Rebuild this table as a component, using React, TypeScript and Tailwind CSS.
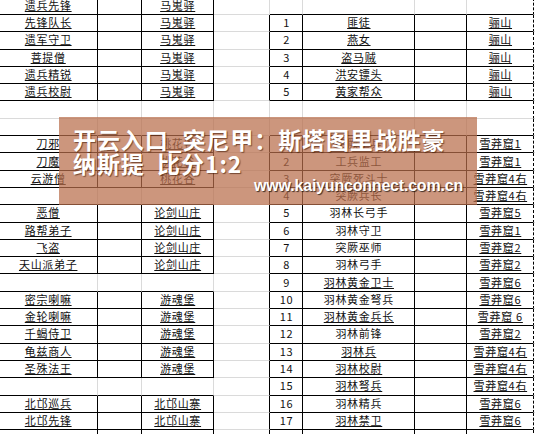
import React from 'react'

// spreadsheet rows: index = row on screen (row 0 is cut at the top)
const leftRows: Record<number, [string, string]> = {
  0: ['遗兵先锋', '马嵬驿'],
  1: ['先锋队长', '马嵬驿'],
  2: ['遗军守卫', '马嵬驿'],
  3: ['菩提僧', '马嵬驿'],
  4: ['遗兵精锐', '马嵬驿'],
  5: ['遗兵校尉', '马嵬驿'],
  8: ['刀邪', '桃花谷'],
  9: ['刀魔', '桃花谷'],
  10: ['云游僧', '桃花谷'],
  12: ['恶僧', '论剑山庄'],
  13: ['路帮弟子', '论剑山庄'],
  14: ['飞盗', '论剑山庄'],
  15: ['天山派弟子', '论剑山庄'],
  17: ['密宗喇嘛', '游魂堡'],
  18: ['金轮喇嘛', '游魂堡'],
  19: ['千蝎侍卫', '游魂堡'],
  20: ['龟兹商人', '游魂堡'],
  21: ['圣殊法王', '游魂堡'],
  23: ['北邙巡兵', '北邙山寨'],
  24: ['北邙先锋', '北邙山寨'],
  25: ['', ''],
}

// [no, name, underline name, place]
const rightRows: Record<number, [string, string, boolean, string]> = {
  1: ['1', '匪徒', true, '骊山'],
  2: ['2', '燕女', true, '骊山'],
  3: ['3', '盗马贼', true, '骊山'],
  4: ['4', '洪安镖头', true, '骊山'],
  5: ['5', '黄家帮众', true, '骊山'],
  8: ['1', '突厥工兵', false, '雪莽窟1'],
  9: ['2', '工兵监工', false, '雪莽窟1'],
  10: ['3', '突厥死斗士', false, '雪莽窟4右'],
  11: ['4', '突厥兵长', false, '雪莽窟4右'],
  12: ['5', '羽林长弓手', false, '雪莽窟5'],
  13: ['6', '羽林守卫', false, '雪莽窟1'],
  14: ['7', '突厥巫师', false, '雪莽窟2'],
  15: ['8', '羽林弓手', false, '雪莽窟2'],
  16: ['9', '羽林黄金卫士', true, '雪莽窟6'],
  17: ['10', '羽林黄金弩兵', false, '雪莽窟6'],
  18: ['11', '羽林黄金兵长', true, '雪莽窟 6'],
  19: ['12', '羽林前锋', false, '雪莽窟2'],
  20: ['13', '羽林兵', true, '雪莽窟4右'],
  21: ['14', '羽林校尉', true, '雪莽窟4右'],
  22: ['15', '羽林弩兵', true, '雪莽窟4右'],
  23: ['16', '羽林精兵', false, '雪莽窟6'],
  24: ['17', '羽林禁卫', true, '雪莽窟6'],
  25: ['', '', false, ''],
}

const ROWS = 26
const COLS = 9

function inTable(r: number, c: number) {
  if (c <= 2) return r in leftRows
  if (c >= 4 && c <= 7) return r in rightRows
  return false
}

function cellContent(r: number, c: number): { text: string; u: boolean } | null {
  const l = leftRows[r]
  const rt = rightRows[r]
  if (l && c === 0) return { text: l[0], u: true }
  if (l && c === 2) return { text: l[1], u: true }
  if (rt && c === 4) return { text: rt[0], u: false }
  if (rt && c === 5) return { text: rt[1], u: rt[2] }
  if (rt && c === 7) return { text: rt[3], u: true }
  return null
}

function Cell({ r, c }: { r: number; c: number }) {
  const bottom = inTable(r, c) || inTable(r + 1, c)
  const right = inTable(r, c) || inTable(r, c + 1)
  const content = cellContent(r, c)

  let cls = 'flex items-center justify-center whitespace-nowrap border-b '
  cls += bottom ? 'border-b-black ' : 'border-b-[#dadada] '
  if (c === 8) cls += 'border-l border-dashed border-l-black'
  else if (c === 7) cls += 'border-r-0'
  else cls += right ? 'border-r border-r-black' : 'border-r border-r-[#dadada]'

  return (
    <div className={cls}>
      {content && content.text && (
        <span
          className={
            content.u
              ? '-mt-px pl-[0.7px] text-[11px] leading-none tracking-[0.7px] text-[#111] underline decoration-1 underline-offset-[1px]'
              : '-mt-px pl-[0.7px] text-[11px] leading-none tracking-[0.7px] text-[#111]'
          }
        >
          {content.text}
        </span>
      )}
    </div>
  )
}

export default function App() {
  const cells = []
  for (let r = 0; r < ROWS; r++) {
    for (let c = 0; c < COLS; c++) {
      cells.push(<Cell key={`${r}-${c}`} r={r} c={c} />)
    }
  }

  return (
    <div className="relative h-[434px] w-[535px] overflow-hidden bg-white font-['Noto_Sans_CJK_SC',sans-serif]">
      <div className="-ml-px -mt-[2.3px] grid w-[537px] grid-cols-[98.7px_44px_72.3px_56.5px_32.5px_112px_52px_66px_1fr] auto-rows-[17.3px]">
        {cells}
      </div>

      <div className="absolute left-[59px] top-[117px] h-[88px] w-[418px] bg-[rgba(185,110,75,0.72)] pl-[14px] pt-[10px] text-white">
        <div className="whitespace-nowrap text-[23px] font-bold leading-[24px] tracking-[0.9px] [text-shadow:1px_1px_1px_rgba(60,20,0,0.6)]">
          开云入口_突尼甲：斯塔图里战胜豪
        </div>
        <div className="whitespace-nowrap text-[23px] font-bold leading-[24px] tracking-[0.9px] [text-shadow:1px_1px_1px_rgba(60,20,0,0.6)]">
          纳斯提{'\u2002'}比分1:2
        </div>
        <div className="mt-[3px] pr-[14px] text-right font-['Liberation_Sans',sans-serif] text-[16px] font-bold leading-[16px] tracking-[-0.2px] [text-shadow:1px_1px_1px_rgba(0,0,0,0.7)]">
          www.kaiyunconnect.com.cn
        </div>
      </div>
    </div>
  )
}
